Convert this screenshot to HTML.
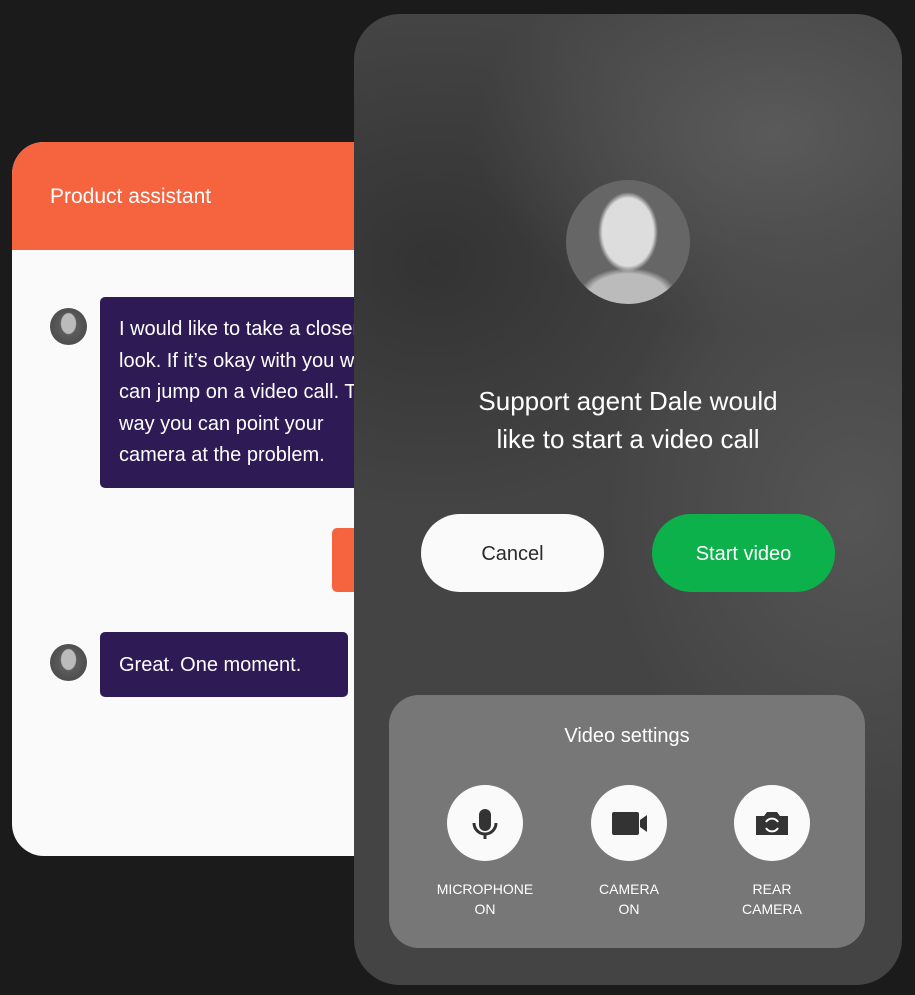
<!DOCTYPE html><html><head><style>
*{margin:0;padding:0;box-sizing:border-box}
body{width:915px;height:995px;background:#1b1b1b;font-family:"Liberation Sans",sans-serif;position:relative;overflow:hidden}
.a{position:absolute}
.chat{left:12px;top:142px;width:360px;height:714px;background:#fafafa;border-radius:32px 0 0 32px;overflow:hidden}
.hd{left:0;top:0;width:100%;height:108px;background:#f6643f;color:#fff;font-size:21px;padding:43px 0 0 38px}
.bub{background:#2e1a55;color:#fff;font-size:20px;line-height:31.5px;border-radius:5px}
.av{width:37px;height:37px;border-radius:50%;background:radial-gradient(ellipse 8px 11px at 50% 42%,#bbb 0 90%,transparent 100%),radial-gradient(circle at 50% 50%,#666,#444)}
.ph{left:354px;top:14px;width:548px;height:971px;border-radius:46px;overflow:hidden;background:radial-gradient(ellipse 300px 200px at 420px 120px,#5a5a5a,transparent),radial-gradient(ellipse 250px 300px at 500px 500px,#555,transparent),radial-gradient(ellipse 300px 250px at 80px 250px,#333,transparent),#444}
.btn{height:78px;width:183px;border-radius:39px;font-size:20px;text-align:center;line-height:80px}
.set{left:35px;top:681px;width:476px;height:253px;background:#777;border-radius:30px;color:#fff}
.c{width:76px;height:76px;border-radius:50%;background:#fafafa;top:90px}
.lb{font-size:14px;line-height:20px;text-align:center;width:120px;top:184px}
</style></head><body>
<div class="a chat">
<div class="a hd">Product assistant</div>
<div class="a av" style="left:38px;top:166px"></div>
<div class="a bub" style="left:88px;top:155px;width:300px;height:191px;padding:17px 0 0 19px">I would like to take a closer<br>look. If it’s okay with you we<br>can jump on a video call. That<br>way you can point your<br>camera at the problem.</div>
<div class="a" style="left:320px;top:386px;width:60px;height:64px;background:#f6643f;border-radius:5px"></div>
<div class="a av" style="left:38px;top:502px"></div>
<div class="a bub" style="left:88px;top:490px;width:248px;height:65px;padding:18px 0 0 19px">Great. One moment.</div>
</div>
<div class="a ph">
<div class="a" style="left:212px;top:166px;width:124px;height:124px;border-radius:50%;background:radial-gradient(ellipse 30px 40px at 50% 42%,#ddd 0 85%,transparent 100%),radial-gradient(ellipse 50px 30px at 50% 95%,#bbb 0 80%,transparent 100%),#666"></div>
<div class="a" style="left:0;top:368px;width:548px;text-align:center;color:#fff;font-size:26px;line-height:38px">Support agent Dale would<br>like to start a video call</div>
<div class="a btn" style="left:67px;top:500px;background:#fafafa;color:#2a2a2a">Cancel</div>
<div class="a btn" style="left:298px;top:500px;background:#0db14b;color:#fff">Start video</div>
<div class="a set">
<div class="a" style="left:0;top:30px;width:100%;text-align:center;font-size:20px">Video settings</div>
<div class="a c" style="left:58px"><svg width="76" height="76" viewBox="0 0 76 76"><rect x="32" y="24" width="12" height="22" rx="6" fill="#333"/><path d="M27 38a11 11 0 0 0 22 0" stroke="#333" stroke-width="3" fill="none"/><rect x="36.5" y="48" width="3" height="6" fill="#333"/></svg></div>
<div class="a c" style="left:202px"><svg width="76" height="76" viewBox="0 0 76 76"><rect x="21" y="27" width="27" height="23" rx="2" fill="#333"/><path d="M49 35l7-5v17l-7-5z" fill="#333"/></svg></div>
<div class="a c" style="left:345px"><svg width="76" height="76" viewBox="0 0 76 76"><path d="M22 31h8l3-4h10l3 4h8v19H22z" fill="#333"/><path d="M32 37a7 7 0 0 1 12 0M44 43a7 7 0 0 1-12 0" stroke="#fff" stroke-width="2" fill="none"/></svg></div>
<div class="a lb" style="left:36px">MICROPHONE<br>ON</div>
<div class="a lb" style="left:180px">CAMERA<br>ON</div>
<div class="a lb" style="left:323px">REAR<br>CAMERA</div>
</div>
</div>
</body></html>
